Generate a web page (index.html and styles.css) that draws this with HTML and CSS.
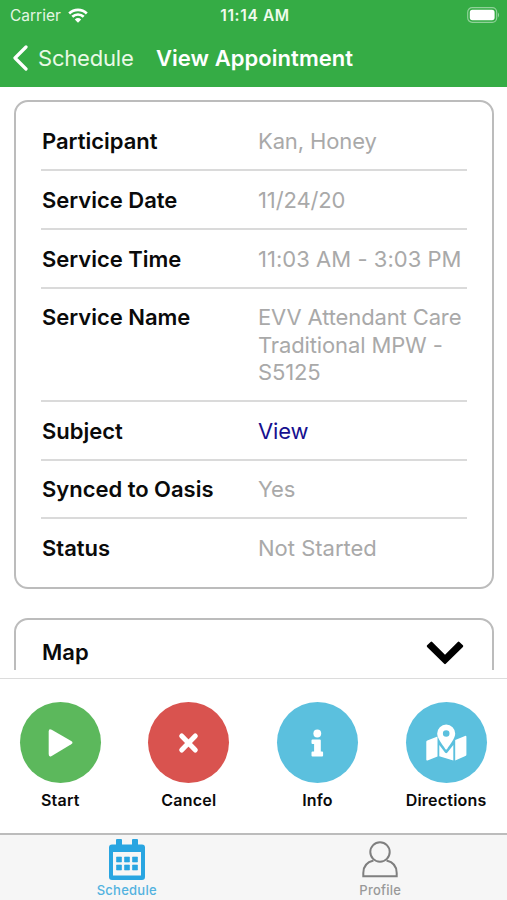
FILE: index.html
```html
<!DOCTYPE html>
<html lang="en">
<head>
<meta charset="utf-8">
<title>View Appointment</title>
<link rel="stylesheet" href="styles.css">
</head>
<body>
<div class="app">
  <header class="header">
    <div class="status-bar">
      <div class="carrier"><span>Carrier</span>
        <svg class="wifi" viewBox="0 0 20 15"><path d="M1.2 5.4a12.8 12.8 0 0 1 17.6 0M4.3 8.8a8.2 8.2 0 0 1 11.4 0" fill="none" stroke="#fff" stroke-width="2.7"/><path d="M6.8 11.4a4.7 4.7 0 0 1 6.4 0L10 14.7z" fill="#fff"/></svg>
      </div>
      <div class="clock">11:14 AM</div>
      <svg class="battery" viewBox="0 0 33 16"><rect x=".7" y=".7" width="29" height="14.6" rx="4.5" fill="none" stroke="#fff" stroke-opacity=".45" stroke-width="1.2"/><rect x="2.8" y="2.8" width="24.8" height="10.4" rx="2.6" fill="#fff"/><path d="M31 5.5q2 2.5 0 5z" fill="#fff" fill-opacity=".5"/></svg>
    </div>
    <nav class="nav">
      <svg class="back-icon" viewBox="0 0 16 26"><path d="M14 2L3 13l11 11" fill="none" stroke="#fff" stroke-width="3.2" stroke-linecap="round" stroke-linejoin="round"/></svg>
      <span class="back">Schedule</span>
      <h1 class="title">View Appointment</h1>
    </nav>
  </header>
  <main class="content">
    <section class="card details">
      <div class="row"><span class="label">Participant</span><span class="value">Kan, Honey</span></div>
      <div class="row"><span class="label">Service Date</span><span class="value">11/24/20</span></div>
      <div class="row"><span class="label">Service Time</span><span class="value time">11:03 AM - 3:03 PM</span></div>
      <div class="row tall"><span class="label">Service Name</span><span class="value">EVV Attendant Care<br>Traditional MPW -<br>S5125</span></div>
      <div class="row"><span class="label">Subject</span><a class="value link">View</a></div>
      <div class="row"><span class="label">Synced to Oasis</span><span class="value">Yes</span></div>
      <div class="row"><span class="label">Status</span><span class="value status">Not Started</span></div>
    </section>
    <section class="card map">
      <span class="label">Map</span>
      <svg class="chevron" viewBox="0 0 38 24"><path d="M4.600.9q.8-.8 1.600 0L19 13.700 31.800.9q.8-.8 1.600 0l3.500 3.400q.8.8 0 1.600L19.800 22.800q-.8.8-1.600 0L1.100 5.900q-.8-.8 0-1.600z" fill="#000"/></svg>
    </section>
  </main>
  <section class="actions">
    <div class="action"><div class="circle start"><svg viewBox="0 0 81 81"><path d="M28.7 29.5q0-3.4 3-1.800l19.500 11.200q2.600 1.700 0 3.400l-19.500 11.600q-3 1.600-3-1.800z" fill="#fff"/></svg></div><span>Start</span></div>
    <div class="action"><div class="circle cancel"><svg viewBox="0 0 81 81"><path d="M33.700 34L47.300 48M47.300 34L33.700 48" fill="none" stroke="#fff" stroke-width="5" stroke-linecap="round"/></svg></div><span>Cancel</span></div>
    <div class="action"><div class="circle info"><svg viewBox="0 0 81 81" fill="#fff"><circle cx="40.3" cy="31.500" r="3.900"/><path d="M35.500 37.500h7.300q1 0 1 1v11h1.300q1 0 1 1v3q0 1-1 1h-9.600q-1 0-1-1v-3q0-1 1-1h1.600v-7.500h-1.600q-1 0-1-1v-2.500q0-1 1-1z"/></svg></div><span>Info</span></div>
    <div class="action"><div class="circle info"><svg viewBox="0 0 81 81" fill="#fff"><path d="M20.300 39.800q0-1 1-1.400l10.200-4v20l-10 4q-1.200.3-1.200-.7zM60.400 34.800v17.800q0 1-1 1.500l-10.200 4.300V38l9.800-4.100q1.400-.4 1.400.9zM33.300 43l5.700 7.500q1.200 1.300 2.400 0l5.900-7.500v15.400L33.300 54.200z"/><path d="M40.200 22.500a9 9 0 0 0-9 9c0 5 5 10.500 8.100 15.400q.9 1.200 1.800 0c3.100-4.900 8.100-10.400 8.100-15.400a9 9 0 0 0-9-9zm0 5.700a3.300 3.300 0 1 1 0 6.600 3.300 3.300 0 0 1 0-6.600z" fill-rule="evenodd"/></svg></div><span>Directions</span></div>
  </section>
  <nav class="tabs">
    <div class="tab active"><svg viewBox="0 0 36 41"><path d="M7 5.500V1q0-1 1-1h4q1 0 1 1v4.500h10V1q0-1 1-1h4q1 0 1 1v4.500h4q3 0 3 3V38q0 3-3 3H3q-3 0-3-3V8.500q0-3 3-3zM4 13v23.500h28V13z" fill="#29a5e1" fill-rule="evenodd"/><path d="M7.500 18h5v5h-5zM15.500 18h5v5h-5zM23.500 18h5v5h-5zM7.500 26h5v5h-5zM15.500 26h5v5h-5zM23.500 26h5v5h-5z" fill="#29a5e1" stroke="#29a5e1" stroke-width=".6" stroke-linejoin="round"/></svg><span>Schedule</span></div>
    <div class="tab"><svg viewBox="0 0 36 41"><g fill="none" stroke="#7f7f7f" stroke-width="2"><circle cx="18" cy="13" r="9.700"/><path d="M11.500 21.500C5 23 1.300 27 1.300 34v3.300h33.400V34c0-7-3.700-11-10.200-12.500"/></g></svg><span>Profile</span></div>
  </nav>
</div>
</body>
</html>
```
FILE: styles.css
```css
* { box-sizing: border-box; }
body { margin: 0; background: #fff; font-family: Inter, "Liberation Sans", sans-serif; color: #0a0a0a; }
.app { width: 507px; height: 900px; display: flex; flex-direction: column; overflow: hidden; background: #fff; }
.header { height: 87px; background: #35ac45; color: #fff; flex: none; }
.status-bar { height: 29px; padding: 1px 7px 0 10px; display: grid; grid-template-columns: 1fr auto 1fr; align-items: center; font-size: 15.5px; }
.carrier { display: flex; align-items: center; gap: 7px; color: #e4f6e2; }
.wifi { width: 20px; height: 15px; }
.clock { font-weight: 600; font-size: 15.5px; letter-spacing: .65px; color: #effbed; }
.battery { width: 33px; height: 16px; justify-self: end; }
.nav { height: 58px; padding-left: 12px; display: flex; align-items: center; }
.back-icon { width: 16px; height: 26px; margin-right: 10px; }
.back { font-size: 22px; letter-spacing: -.2px; width: 118px; color: #e9f9e6; }
.title { margin: 0; font-size: 22px; font-weight: 600; letter-spacing: .05px; }
.content { height: 583px; flex: none; overflow: hidden; padding: 13px 13px 0 14px; }
.card { border: 2px solid #bcbcbc; border-radius: 14px; padding: 0 25px; }
.details { height: 489px; padding-top: 10.7px; }
.row { height: 58.7px; padding-top: 15.5px; display: grid; grid-template-columns: 217px 1fr; border-bottom: 2px solid #dadada; font-size: 22px; line-height: 27.4px; white-space: nowrap; }
.row:last-child { border-bottom: 0; }
.tall { height: 113.3px; }
.label { font-size: 22px; font-weight: 600; padding-left: 1px; letter-spacing: -.02px; }
.value { color: #a9a9a9; letter-spacing: -.13px; }
.time { letter-spacing: .03px; }
.status { letter-spacing: 0; }
.link { color: #16108f; }
.map { height: 100px; margin-top: 29px; padding-top: 17px; display: flex; justify-content: space-between; align-items: flex-start; line-height: 30px; }
.chevron { width: 38px; height: 24px; margin: 4px 3px 0 0; }
.actions { margin-top: 8px; height: 155px; flex: none; border-top: 1px solid #dcdcdc; padding: 23px 0 0 20px; display: flex; gap: 48px; }
.action { width: 80.6px; display: flex; flex-direction: column; align-items: center; font-size: 16px; font-weight: 600; line-height: 20px; letter-spacing: .22px; }
.action span { margin-top: 7px; white-space: nowrap; }
.circle { width: 81px; height: 81px; border-radius: 50%; }
.circle svg { display: block; width: 81px; height: 81px; }
.start { background: #5cb85c; }
.cancel { background: #d9534f; }
.info { background: #5bc0de; }
.tabs { height: 67px; flex: none; border-top: 2px solid #bcbcbc; background: #f6f6f6; display: grid; grid-template-columns: 1fr 1fr; }
.tab { padding-top: 4px; display: flex; flex-direction: column; align-items: center; font-size: 13px; font-weight: 500; line-height: 16px; letter-spacing: .25px; color: #999; }
.tab svg { width: 36px; height: 41px; }
.tab span { margin-top: 2px; }
.active { color: #52b2df; }
```
